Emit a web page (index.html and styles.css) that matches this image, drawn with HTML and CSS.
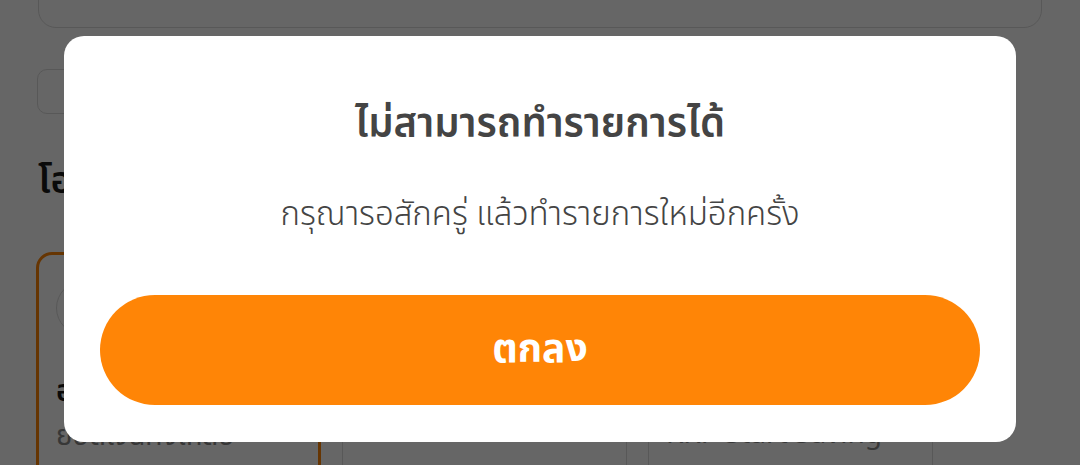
FILE: index.html
```html
<!DOCTYPE html>
<html lang="th">
<head>
    <meta charset="UTF-8">
    <meta name="viewport" content="width=device-width, initial-scale=1.0">
    <title>ไม่สามารถทำรายการได้</title>
    <link rel="stylesheet" href="styles.css">
</head>
<body>

    <div class="pagina">
        <div class="cartao-topo"></div>
        <div class="filtro"></div>
        <h3 class="secao">โอนเงินเข้าบัญชี</h3>

        <div class="lista-contas">
            <div class="conta ativa">
                <div class="conta-icone"></div>
                <div class="conta-nome">ออมทรัพย์</div>
                <div class="conta-desc">ยอดเงินคงเหลือ</div>
            </div>
            <div class="conta">
                <div class="conta-icone"></div>
                <div class="conta-nome">ฝากประจำ</div>
            </div>
            <div class="conta">
                <div class="conta-icone"></div>
                <div class="conta-nome">เงินฝาก</div>
                <div class="conta-desc">KKP Start Saving</div>
            </div>
        </div>
    </div>

    <!-- alerta por cima de tudo -->
    <div class="fundo-escuro">
        <div class="alerta">
            <h2 class="alerta-titulo">ไม่สามารถทำรายการได้</h2>
            <p class="alerta-texto">กรุณารอสักครู่ แล้วทำรายการใหม่อีกครั้ง</p>
            <button class="alerta-botao">ตกลง</button>
        </div>
    </div>

</body>
</html>
```

FILE: styles.css
```css
:root {
    --cor-laranja: #ff8506;
    --cor-borda: #dcdcdc;
    --cor-texto: #444444;
    --cor-fraca: #8a8a8a;
}

* {
    margin: 0;
    padding: 0;
    box-sizing: border-box;
    font-family: "Noto Sans Thai", "Noto Sans", sans-serif;
}

body {
    background: #fff;
    height: 465px;
    overflow: hidden;
}

.pagina {
    padding: 0 38px;
}

.cartao-topo {
    height: 48px;
    margin-top: -20px;
    border: 1px solid var(--cor-borda);
    border-radius: 18px;
}

.filtro {
    width: 140px;
    height: 45px;
    margin-top: 41px;
    margin-left: -1px;
    border: 1px solid var(--cor-borda);
    border-radius: 10px;
}

.secao {
    margin-top: 40px;
    font-size: 38px;
    font-weight: 600;
    color: #1a1a1a;
    line-height: 56px;
}

.lista-contas {
    display: flex;
    gap: 21px;
    margin-top: 42px;
    margin-left: -2px;
}

.conta {
    width: 285px;
    height: 240px;
    padding: 26px 17px;
    border: 1px solid var(--cor-borda);
    border-radius: 16px;
}

.conta.ativa {
    border: 3px solid var(--cor-laranja);
}

.conta-icone {
    width: 54px;
    height: 54px;
    border-radius: 50%;
    border: 1px solid var(--cor-borda);
}

.conta-nome {
    margin-top: 34px;
    font-size: 30px;
    font-weight: 600;
    color: #1a1a1a;
}

.conta-desc {
    font-size: 28px;
    color: var(--cor-fraca);
}

.fundo-escuro {
    position: fixed;
    inset: 0;
    background: rgba(0, 0, 0, 0.6);
    display: flex;
    justify-content: center;
    align-items: flex-start;
    padding: 36px 64px 0;
}

.alerta {
    background: #fff;
    width: 100%;
    border-radius: 20px;
    padding: 63px 36px 37px;
    text-align: center;
}

.alerta-titulo {
    font-size: 40px;
    font-weight: 600;
    line-height: 52px;
    color: var(--cor-texto);
}

.alerta-texto {
    margin-top: 44px;
    font-size: 33px;
    font-weight: 300;
    line-height: 40px;
    color: #444444;
}

.alerta-botao {
    display: block;
    width: 100%;
    height: 110px;
    margin-top: 60px;
    border: none;
    border-radius: 55px;
    background: var(--cor-laranja);
    color: #fff;
    font-size: 39px;
    font-weight: 700;
    cursor: pointer;
}
```
